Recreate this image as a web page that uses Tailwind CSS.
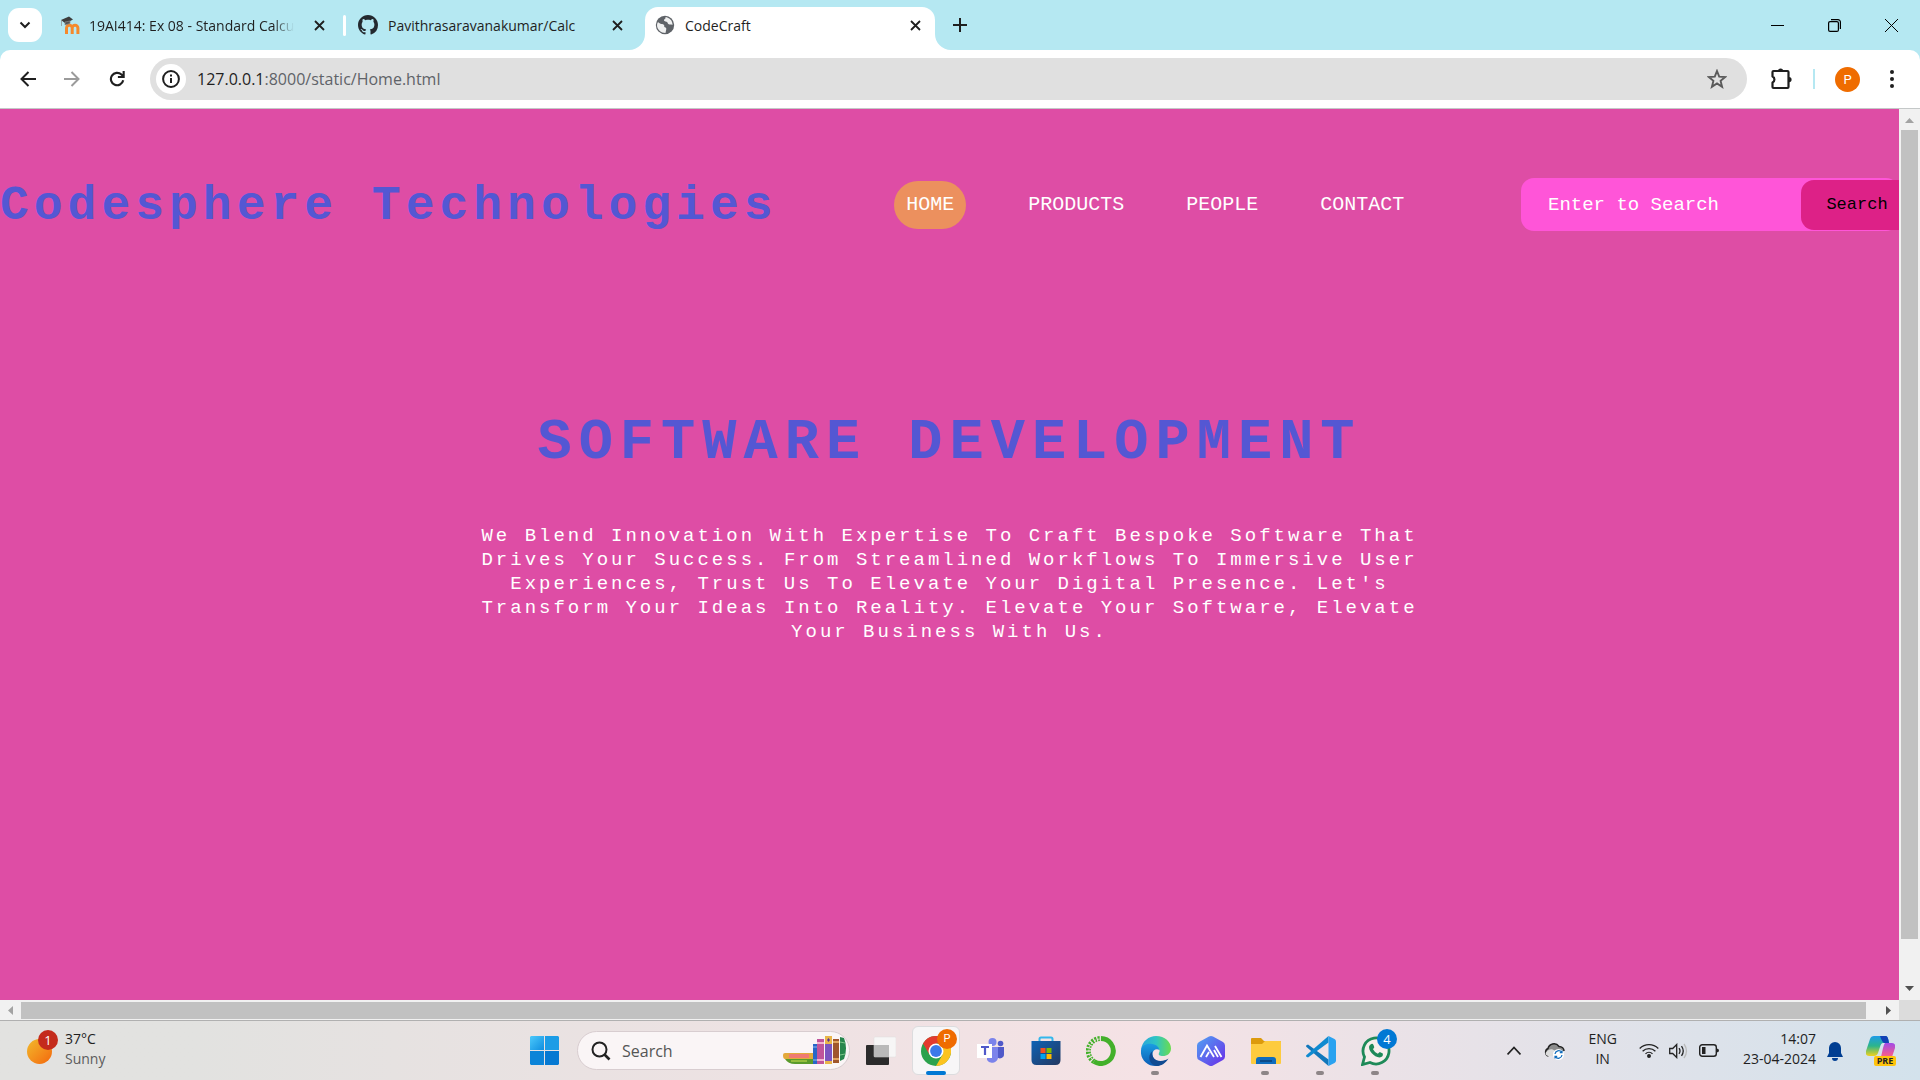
<!DOCTYPE html>
<html lang="en">
<head>
<meta charset="utf-8">
<title>CodeCraft</title>
<script src="https://cdn.jsdelivr.net/npm/@tailwindcss/browser@4"></script>
</head>
<body class="flex h-screen flex-col overflow-hidden bg-white font-['Open_Sans',sans-serif] text-[#1f1f1f]">

<!-- Tab strip -->
<div class="flex h-[50px] shrink-0 items-end bg-[#b5e8f2]">
  <div class="flex h-[50px] items-center pl-2">
    <button aria-label="Search tabs" class="grid h-[34px] w-[34px] place-items-center rounded-[11px] bg-white">
      <svg class="h-3 w-3" viewBox="0 0 12 12" fill="none" stroke="#1f1f1f" stroke-width="2"><path d="M1.5 3.5 6 8l4.500-4.500"/></svg>
    </button>
  </div>
  <div class="flex h-[50px] w-[293px] items-center pl-[18px]">
    <svg class="h-5 w-5 shrink-0" viewBox="0 0 20 20"><path d="M6.500 19v-6a2.800 2.800 0 0 1 5.700 0v6m0-6a2.800 2.800 0 0 1 5.700 0v6" fill="none" stroke="#f5892b" stroke-width="3"/><path d="M1 5 9 1.500l4 3L5.500 8.500z" fill="#3d3d3d"/><path d="M5 7v3l5-1.500V6zM1.500 5v6" fill="#555" stroke="#888" stroke-width=".7"/></svg>
    <span class="ml-[9px] bg-linear-to-r from-[#1f1f1f] from-90% to-transparent bg-clip-text text-[14px] whitespace-nowrap text-transparent">19AI414: Ex 08 - Standard Calcu</span>
    <button aria-label="Close tab" class="ml-auto mr-[6px] grid h-5 w-5 place-items-center"><svg class="h-[11px] w-[11px]" viewBox="0 0 11 11" stroke="#1f1f1f" stroke-width="1.800"><path d="m1 1 9 9M10 1 1 10"/></svg></button>
  </div>
  <div class="mb-[14px] ml-2 h-[21px] w-[3px] rounded bg-white"></div>
  <div class="flex h-[50px] w-[299px] items-center pl-3">
    <svg class="h-5 w-5 shrink-0" viewBox="0 0 16 16" fill="#24292f"><path d="M8 0C3.580 0 0 3.580 0 8c0 3.540 2.290 6.530 5.470 7.590.4.070.55-.17.55-.38 0-.19-.01-.82-.01-1.490-2.010.37-2.530-.49-2.690-.94-.09-.23-.48-.94-.82-1.130-.28-.15-.68-.52-.01-.53.63-.01 1.080.58 1.230.82.72 1.210 1.870.87 2.330.66.07-.52.28-.87.51-1.070-1.780-.2-3.640-.89-3.640-3.950 0-.87.31-1.590.82-2.150-.08-.2-.36-1.020.08-2.120 0 0 .67-.21 2.200.82.640-.18 1.320-.27 2-.27s1.360.09 2 .27c1.530-1.040 2.200-.82 2.200-.82.44 1.100.16 1.920.08 2.120.51.56.82 1.270.82 2.150 0 3.070-1.870 3.750-3.650 3.950.29.25.54.73.54 1.480 0 1.070-.01 1.930-.01 2.200 0 .21.15.46.55.38A8.010 8.010 0 0 0 16 8c0-4.420-3.580-8-8-8z"/></svg>
    <span class="ml-[10px] text-[14px] whitespace-nowrap">Pavithrasaravanakumar/Calc</span>
    <button aria-label="Close tab" class="mr-[18px] ml-auto grid h-5 w-5 place-items-center"><svg class="h-[11px] w-[11px]" viewBox="0 0 11 11" stroke="#1f1f1f" stroke-width="1.800"><path d="m1 1 9 9M10 1 1 10"/></svg></button>
  </div>
  <div class="relative flex h-[43px] w-[290px] items-center rounded-t-[13px] bg-white pr-[10px] pb-[7px] pl-[10px]">
    <svg class="absolute bottom-0 -left-4 h-4 w-4" viewBox="0 0 16 16" fill="#fff"><path d="M16 0v16H0A16 16 0 0 0 16 0"/></svg>
    <svg class="absolute -right-4 bottom-0 h-4 w-4" viewBox="0 0 16 16" fill="#fff"><path d="M0 0v16h16A16 16 0 0 1 0 0"/></svg>
    <svg class="h-5 w-5" viewBox="0 0 20 20"><circle cx="10" cy="10" r="9.200" fill="#5f6368"/><path d="M3 7c2 2.500 5 1.500 6 3 .8 1.500-.5 2 1.500 2.500 1.500.5.500 3 0 5.500C6 18 2 14.500 2 10c0-1 .4-2.200 1-3M10 2c1.500.5 0 2-1 2.800C8.500 6 10 6.500 11.500 6.800c1.500.4 1 2.700 3 2.700 1.500 0 2.500-.5 3 .5.200-4-2.500-7.500-7.500-8" fill="#fff" fill-opacity=".9"/></svg>
    <span class="ml-[10px] text-[14px]">CodeCraft</span>
    <button aria-label="Close tab" class="ml-auto grid h-5 w-5 place-items-center"><svg class="h-[11px] w-[11px]" viewBox="0 0 11 11" stroke="#1f1f1f" stroke-width="1.800"><path d="m1 1 9 9M10 1 1 10"/></svg></button>
  </div>
  <button aria-label="New tab" class="ml-[18px] grid h-[50px] w-[14px] place-items-center"><svg class="h-[14px] w-[14px]" viewBox="0 0 14 14" stroke="#1f1f1f" stroke-width="2"><path d="M7 0v14M0 7h14"/></svg></button>
  <div class="ml-auto flex h-[50px] items-center">
    <button aria-label="Minimize" class="grid h-full w-[57px] place-items-center"><svg class="h-[13px] w-[13px]" viewBox="0 0 13 13" stroke="#000"><path d="M0 6.500h13"/></svg></button>
    <button aria-label="Restore" class="grid h-full w-[57px] place-items-center"><svg class="h-[13px] w-[13px]" viewBox="0 0 13 13" fill="none" stroke="#000" stroke-width="1.200"><rect x=".6" y="2.600" width="9.800" height="9.800" rx="1.500"/><path d="M3 .6h7a2.400 2.400 0 0 1 2.400 2.400v7"/></svg></button>
    <button aria-label="Close" class="grid h-full w-[57px] place-items-center"><svg class="h-[13px] w-[13px]" viewBox="0 0 13 13" stroke="#000"><path d="m0 0 13 13M13 0 0 13"/></svg></button>
  </div>
</div>

<!-- Toolbar -->
<div class="shrink-0 bg-[#b5e8f2]">
  <div class="flex h-[59px] items-center rounded-t-[10px] border-b border-[#c4c8c8] bg-white">
    <button aria-label="Back" class="ml-5 grid h-4 w-4 place-items-center"><svg class="h-4 w-4" viewBox="0 0 16 16" fill="none" stroke="#1f1f1f" stroke-width="2"><path d="M16 8H1.500M8.500 1 1.500 8l7 7"/></svg></button>
    <button aria-label="Forward" class="ml-7 grid h-4 w-4 place-items-center"><svg class="h-4 w-4" viewBox="0 0 16 16" fill="none" stroke="#9b9b9b" stroke-width="2"><path d="M0 8h14.500M7.500 1l7 7-7 7"/></svg></button>
    <button aria-label="Reload" class="ml-7 grid h-[18px] w-[18px] place-items-center"><svg class="h-4 w-4" viewBox="0 0 18 18" fill="none" stroke="#1f1f1f" stroke-width="2.400"><path d="M16 10.500A7 7 0 1 1 14 4l2 2M16.500 0v6.700H10"/></svg></button>
    <form class="ml-6 flex h-[42px] flex-1 items-center rounded-full bg-[#e0e0e0] pr-5 pl-[6px]">
      <span class="grid h-[30px] w-[30px] place-items-center rounded-full bg-white"><svg class="h-[18px] w-[18px]" viewBox="0 0 18 18" fill="none" stroke="#1f1f1f" stroke-width="2"><circle cx="9" cy="9" r="7.900"/><path d="M9 8v5M9 4.500v2"/></svg></span>
      <span class="ml-[11px] flex-1 text-[16px] text-[#5f6368]"><span class="text-[#1f1f1f]">127.0.0.1</span>:8000/static/Home.html</span>
      <button type="button" aria-label="Bookmark" class="grid h-5 w-5 place-items-center"><svg class="h-5 w-5" viewBox="0 0 20 20" fill="none" stroke="#5a5a5a" stroke-width="1.900"><path d="m10 2 2.200 5.600 6 .4-4.600 3.900 1.500 5.900L10 14.500l-5.100 3.300 1.500-5.900L1.800 8l6-.4z"/></svg></button>
    </form>
    <button aria-label="Extensions" class="ml-[23px] grid h-[22px] w-[22px] place-items-center"><svg class="h-[22px] w-[22px]" viewBox="0 0 22 22"><path d="M3.500 3h14q1 0 1 1v15q0 1-1 1h-14q-1 0-1-1v-4.500a3.300 3.300 0 0 0 0-6V4q0-1 1-1z" fill="none" stroke="#1f1f1f" stroke-width="2.200" stroke-linejoin="round"/><path d="M8 3a2.600 2.600 0 0 1 5.200 0M19 9a2.600 2.600 0 0 1 0 5.200" fill="#1f1f1f"/></svg></button>
    <span class="ml-[21px] h-5 w-[2px] bg-[#b5e8f2]"></span>
    <button aria-label="Profile" class="ml-5 h-[25px] w-[25px] rounded-full bg-[#ef6c00] font-['Roboto',sans-serif] text-[13px] leading-[25px] text-white">P</button>
    <button aria-label="Menu" class="mr-[19px] ml-[23px] grid h-5 w-[18px] place-items-center"><svg class="h-5 w-1" viewBox="0 0 4 20" fill="#1f1f1f"><circle cx="2" cy="3" r="2"/><circle cx="2" cy="10" r="2"/><circle cx="2" cy="17" r="2"/></svg></button>
  </div>
</div>

<!-- Viewport with classic scrollbars -->
<div class="flex min-h-0 flex-1">
  <main class="min-w-0 flex-1 overflow-hidden bg-[#de4da5] font-['Liberation_Mono',monospace]">
    <header class="flex items-center justify-between pt-[69px]">
      <div class="pt-1 text-5xl leading-[49px] font-bold tracking-[5px] whitespace-nowrap text-[#5457d3]">Codesphere Technologies</div>
      <nav class="flex items-center gap-[62px] text-xl leading-7 text-white">
        <a href="#" class="rounded-[24px] bg-[#ec905e] px-3 py-[10px]">HOME</a>
        <a href="#">PRODUCTS</a>
        <a href="#">PEOPLE</a>
        <a href="#">CONTACT</a>
      </nav>
      <form class="flex h-[53px] w-[378px] items-center rounded-[13px] bg-[#ff55d8]">
        <input type="text" aria-label="Enter to Search" placeholder="Enter to Search" class="h-full w-[280px] shrink-0 bg-transparent pl-[27px] text-[19px] text-white outline-none placeholder:text-white">
        <button type="button" class="h-[50px] w-[112px] shrink-0 rounded-[13px] bg-[#dd2187] text-[17px] text-black">Search</button>
      </form>
    </header>
    <h1 class="mt-[178px] text-center text-[57px] leading-[68px] font-bold tracking-[7px] text-[#5457d3]">SOFTWARE DEVELOPMENT</h1>
    <p class="mx-auto mt-[47px] max-w-[950px] text-center text-[19px] leading-6 tracking-[3px] text-white">We Blend Innovation With Expertise To Craft Bespoke Software That Drives Your Success. From Streamlined Workflows To Immersive User Experiences, Trust Us To Elevate Your Digital Presence. Let's Transform Your Ideas Into Reality. Elevate Your Software, Elevate Your Business With Us.</p>
  </main>
  <div class="flex w-[21px] shrink-0 flex-col items-center bg-[#f1f1f1]">
    <svg class="h-[21px] w-[9px] shrink-0" viewBox="0 0 9 21"><path d="M0 14h9L4.500 9z" fill="#a3a3a3"/></svg>
    <div class="w-[17px] flex-1 bg-[#c1c1c1]"></div>
    <svg class="mt-10 h-[21px] w-[9px] shrink-0" viewBox="0 0 9 21"><path d="M0 7h9l-4.500 5z" fill="#505050"/></svg>
  </div>
</div>
<div class="flex h-5 shrink-0 items-center bg-[#f1f1f1]">
  <svg class="h-[9px] w-[21px]" viewBox="0 0 21 9"><path d="M13 0v9L8 4.500z" fill="#a3a3a3"/></svg>
  <div class="h-[17px] flex-1 bg-[#c1c1c1]"></div>
  <svg class="ml-[12px] h-[9px] w-[21px]" viewBox="0 0 21 9"><path d="M8 0v9l5-4.500z" fill="#505050"/></svg>
  <div class="h-full w-[21px] bg-[#dcdcdc]"></div>
</div>

<!-- Taskbar -->
<div class="grid h-[60px] shrink-0 grid-cols-[1fr_auto_1fr] items-center border-t border-[#b0b0b0] bg-linear-to-r from-[#e2e2e0] from-10% via-[#f5e2e5] via-60% to-[#d3e2ec]">
  <div class="flex items-center pb-1 pl-[27px]">
    <div class="relative mb-1 h-[34px] w-8">
      <div class="absolute bottom-0 left-0 h-[25px] w-[25px] rounded-full bg-linear-to-br from-[#f0b92c] to-[#f2650b]"></div>
      <div class="absolute top-0 left-[11px] h-5 w-5 rounded-full bg-[#c42b1c] text-center text-[13px] leading-5 text-white">1</div>
    </div>
    <div class="ml-[6px] text-[14px] leading-5"><div>37°C</div><div class="text-[#5c5c5c]">Sunny</div></div>
  </div>

  <div class="flex h-[59px] items-center">
    <button aria-label="Start" class="grid h-full w-[55px] place-items-center"><svg class="h-[29px] w-[29px]" viewBox="0 0 29 29"><defs><linearGradient id="win" x1="0" y1="0" x2="1" y2="1" gradientUnits="objectBoundingBox"><stop stop-color="#4cc9fb"/><stop offset="1" stop-color="#0f8ee0"/></linearGradient></defs><path d="M1 0h13v14H0V1z" fill="url(#win)"/><path d="M15 0h13l1 1v13H15z" fill="#1c9ce6"/><path d="M0 15h14v14H1l-1-1z" fill="#0c84d8"/><path d="M15 15h14v13l-1 1H15z" fill="#0679d2"/></svg></button>
    <label class="ml-[5px] flex h-[39px] w-[273px] items-center overflow-hidden rounded-full border border-[#d8cdd0] bg-[#faf5f6] pr-[3px] pl-[13px]">
      <svg class="h-5 w-5" viewBox="0 0 20 20" fill="none" stroke="#222" stroke-width="2"><circle cx="8.500" cy="8.500" r="7"/><path d="m13.500 13.500 5 5" stroke-width="2.600"/></svg>
      <input type="text" placeholder="Search" class="ml-[11px] w-[160px] min-w-0 text-[16px] outline-none placeholder:text-[#555]">
      <svg class="ml-auto h-[29px] w-[63px] shrink-0" viewBox="0 0 63 29"><path d="M0 19q0-2 2-2h28v6H2q-2 0-2-4" fill="#e3a93c"/><path d="M6 18h20v4H6z" fill="#f07a72"/><path d="M2 23h28v5H12q-7 0-10-5" fill="#5a9a2b"/><path d="M8 25h16" stroke="#a8c845" stroke-width="1.500"/><path d="M30 8h4v20h-4z" fill="#2767c8"/><path d="M30 11h4M30 24h4" stroke="#8db7ef"/><path d="M34 3h7v25h-7z" fill="#c0559b"/><path d="M34 7h7M34 24h7" stroke="#f3b3cf" stroke-width="2"/><path d="M42 0h7v28h-7z" fill="#7d55c0"/><path d="M42 0h7v8h-7zM42 25h7v3h-7z" fill="#e8b54a"/><path d="m45.500 2 1.500 2-1.500 2L44 4z" fill="#5a3692"/><path d="M50 3h6v24h-6z" fill="#a0562c"/><path d="M50 6h6M50 23h6" stroke="#e1a45d" stroke-width="2"/><path d="m57 1 4 1q4 10 0 21l-4 2z" fill="#27864d"/><path d="m57 6 5 1M57 19l5-1" stroke="#7cc58a"/></svg>
    </label>
    <div class="ml-[3px] grid grid-cols-[repeat(10,55px)]">
      <button aria-label="Task view" class="grid h-[59px] place-items-center"><svg class="h-[30px] w-[30px]" viewBox="0 0 30 30"><rect y="9" width="23" height="20" rx="1" fill="#2b2b2b"/><rect x="8" y="1" width="22" height="20" rx="1" fill="#f7f7f7" fill-opacity=".94" stroke="#ddd" stroke-width=".5"/><path d="M8 9h15v12H8z" fill="#b9b9b9"/></svg></button>
      <button aria-label="Chrome" class="relative grid h-[59px] place-items-center">
        <span class="absolute top-[5px] left-1 h-[49px] w-12 rounded-md border border-[#dcdcde] bg-[#f7f6f7]"></span>
        <svg class="relative h-[30px] w-[30px]" viewBox="0 0 30 30"><circle cx="15" cy="15" r="15" fill="#2ba24c"/><path d="M2 7.500A15 15 0 0 1 28 7.500H15L8.500 18.800z" fill="#e33b2e"/><path d="M28 7.500A15 15 0 0 1 15 30l6.500-11.300V7.500z" fill="#fcc31e"/><circle cx="15" cy="15" r="7.500" fill="#fff"/><circle cx="15" cy="15" r="5.900" fill="#3b79e8"/></svg>
        <span class="absolute top-2 right-[6px] h-5 w-5 rounded-full bg-[#ef6c00] font-['Roboto',sans-serif] text-[11px] leading-5 text-white">P</span>
        <span class="absolute bottom-[5px] left-[18px] h-1 w-5 rounded-full bg-[#0078d4]"></span>
      </button>
      <button aria-label="Teams" class="grid h-[59px] place-items-center"><svg class="h-[26px] w-[28px]" viewBox="0 0 28 26"><circle cx="23.500" cy="5.500" r="2.800" fill="#5059c9"/><path d="M20 9h7v7a4 4 0 0 1-7 3z" fill="#5059c9"/><circle cx="15.500" cy="4" r="4" fill="#7b83eb"/><path d="M10 9h11v9a6 6 0 0 1-11 4z" fill="#7b83eb"/><rect y="6" width="15" height="14" fill="#fff"/><path d="M4 9h8M8 9v8" stroke="#5059c9" stroke-width="2.200"/></svg></button>
      <button aria-label="Store" class="grid h-[59px] place-items-center"><svg class="h-[30px] w-[30px]" viewBox="0 0 30 30"><defs><linearGradient id="st" x1="0" y1="0" x2="1" y2="1"><stop stop-color="#0d62b5"/><stop offset="1" stop-color="#243860"/></linearGradient></defs><path d="M8.500 6V3Q8.500 1.500 10 1.500h10q1.500 0 1.500 1.500v3" fill="none" stroke="#33b7ec" stroke-width="2"/><path d="M.5 5h29v19q0 5-5 5h-19q-5 0-5-5z" fill="url(#st)"/><path d="M9.500 12h5v5h-5z" fill="#f25022"/><path d="M15.500 12h5v5h-5z" fill="#7fba00"/><path d="M9.500 18h5v5h-5z" fill="#00a4ef"/><path d="M15.500 18h5v5h-5z" fill="#ffb900"/></svg></button>
      <button aria-label="Anaconda" class="grid h-[59px] place-items-center"><svg class="h-[30px] w-[30px]" viewBox="0 0 30 30" fill="none" stroke="#43b02a"><path d="M15 2.500A12.500 12.500 0 1 1 8 25.500" stroke-width="5"/><path d="M8 25.500A12.500 12.500 0 0 1 15 2.500" stroke-width="5" stroke-dasharray="2 1.200"/><path d="M6 23A12 12 0 0 1 14 3" stroke="#f7e3e6" stroke-width="1" stroke-dasharray="2 2"/></svg></button>
      <button aria-label="Edge" class="relative grid h-[59px] place-items-center"><svg class="h-[30px] w-[30px]" viewBox="0 0 30 30"><defs><linearGradient id="e1"><stop stop-color="#2aa5dc"/><stop offset=".5" stop-color="#2fc4c4"/><stop offset="1" stop-color="#6bdc4e"/></linearGradient><linearGradient id="e2" x1="0" y1="0" x2="0" y2="1"><stop stop-color="#1b9de2"/><stop offset="1" stop-color="#0b5cb5"/></linearGradient></defs><path d="M0 14C1 5 8 0 15 0c9 0 15 6 15 12.500 0 5-4 7.500-8 7.500-3.500 0-5-1.200-4-3 2-3-1-7-6-7-6 0-11 1-12 4" fill="url(#e1)"/><path d="M0 14c1-5 6-7 11-6 4 .5 7 3 7.500 6-3-2-7 0-7 4 0 6 6 9 14 6-3 4-7 6-11 6C6 30-1 23 0 14" fill="url(#e2)"/><path d="M11.500 15c-1.500 5 2 10 8 10 3 0 6-1 8-2.500-3 5-7.500 7.500-12 7.500-7-1-10-10-4-15" fill="#104a91"/></svg><span class="absolute bottom-[5px] left-[23px] h-1 w-2 rounded-full bg-[#8d8587]"></span></button>
      <button aria-label="AI assistant" class="grid h-[59px] place-items-center"><svg class="h-[30px] w-[28px]" viewBox="0 0 28 30"><defs><linearGradient id="ai" x1="0" y1="0" x2="1" y2="1"><stop stop-color="#50a4f3"/><stop offset="1" stop-color="#6b2be8"/></linearGradient></defs><path d="M12 .5q2-1 4 0l10 5.500q2 1 2 3.500v11q0 2-2 3.500l-10 5.500q-2 1-4 0L2 24q-2-1-2-3.500v-11Q0 7 2 6z" fill="url(#ai)"/><path d="m3.500 21 6.500-11.500 7 11.500M9 21l3-5M18 10l6.500 11M17 14l4 7" fill="none" stroke="#fff" stroke-width="1.800"/></svg></button>
      <button aria-label="File Explorer" class="relative grid h-[59px] place-items-center"><svg class="h-[30px] w-[30px]" viewBox="0 0 30 30"><path d="M0 3q0-1 1-1h9l3 3h16q1 0 1 1v8H0z" fill="#dc9a0c"/><path d="M0 8h11l3-3h15q1 0 1 1v21q0 1-1 1H1q-1 0-1-1z" fill="#fdcb3f"/><path d="M5 28v-4q0-3 3-3h14q3 0 3 3v4z" fill="#0f6cbd"/><path d="M9 25h12" stroke="#0a3f78" stroke-width="1.500"/></svg><span class="absolute bottom-[5px] left-[23px] h-1 w-2 rounded-full bg-[#8d8587]"></span></button>
      <button aria-label="Visual Studio Code" class="relative grid h-[59px] place-items-center"><svg class="h-[30px] w-[30px]" viewBox="0 0 30 30"><path d="m2 8.500 20.500 15V30L.5 11q-1-1 0-1.800z" fill="#1177bb"/><path d="M2 21.500 22.500 6.500V0L.5 19q-1 1 0 1.800z" fill="#0f8ad0"/><path d="m22.500 0 6 3q1.500.8 1.500 2.500v19q0 1.700-1.500 2.500l-6 3z" fill="#2aa2f0"/></svg><span class="absolute bottom-[5px] left-[23px] h-1 w-2 rounded-full bg-[#8d8587]"></span></button>
      <button aria-label="WhatsApp" class="relative grid h-[59px] place-items-center"><svg class="h-[30px] w-[30px]" viewBox="0 0 30 30"><path d="m1.500 28.500 2-7.500a13 13 0 1 1 5.500 5.500z" fill="#f6efec" stroke="#1e8a58" stroke-width="2.800"/><path d="M9.500 8.500q2-1.500 3 .5l.8 2.200-1.300 2q1.500 3 4.800 4.500l2-1.700 3 1.500q.8 3.500-3.300 4C13 21 7 14.500 8.200 10z" fill="#1e8a58"/></svg><span class="absolute top-2 right-[6px] h-5 w-5 rounded-full bg-[#0078d4] text-[13px] leading-5 text-white">4</span><span class="absolute bottom-[5px] left-[23px] h-1 w-2 rounded-full bg-[#8d8587]"></span></button>
    </div>
  </div>

  <div class="flex items-center justify-end pr-[25px]">
    <svg class="h-[14px] w-[14px]" viewBox="0 0 14 14" fill="none" stroke="#222" stroke-width="1.800"><path d="m.5 10.500 6.500-7 6.500 7"/></svg>
    <svg class="ml-[23px] h-[18px] w-[21px]" viewBox="0 0 21 18"><path d="M4.500 14a4 4 0 0 1-.5-7.500C5 2 11.500-.5 15 4.500c3 0 5 2 5 4.500" fill="#8c8c8c" stroke="#222" stroke-width="1.500"/><path d="M1.500 11C4 7 8 6 11 9l-1 5H4q-2.500-.5-2.500-3" fill="#ddd"/><circle cx="14.500" cy="12.500" r="5.500" fill="#fff"/><path d="M11 12a3.700 3.700 0 0 1 6.700-1.700M18 13a3.700 3.700 0 0 1-6.700 1.700M18 8.500v2.200h-2.200M11 16.500v-2.200h2.200" fill="none" stroke="#0f6cbd" stroke-width="1.200"/></svg>
    <div class="ml-[23px] pb-[3px] text-center text-[14px] leading-5"><div>ENG</div><div>IN</div></div>
    <svg class="ml-[22px] h-[15px] w-5" viewBox="0 0 20 15" fill="none" stroke="#222" stroke-width="1.300"><path d="M.7 5.500a13 13 0 0 1 18.600 0M3.600 8.200a9 9 0 0 1 12.800 0M6.500 10.900a5 5 0 0 1 7 0"/><circle cx="10" cy="13" r="1.300" fill="#222"/></svg>
    <svg class="ml-[10px] h-4 w-5" viewBox="0 0 20 16" fill="none" stroke="#222" stroke-width="1.300"><path d="M.7 5.500h3l4-4v13l-4-4h-3zM10 5.200q2 2.800 0 5.600M12.500 3.200q3.500 4.800 0 9.600"/><path d="M15 1q5 7 0 14" stroke="#bbb"/></svg>
    <svg class="ml-[10px] h-[13px] w-5" viewBox="0 0 20 13"><rect x=".7" y=".7" width="16.600" height="11.600" rx="2.500" fill="none" stroke="#222" stroke-width="1.400"/><path d="M3 3h3.500v7H3zM17.500 4.500q2.500 0 2.500 2t-2.500 2z" fill="#222"/></svg>
    <div class="ml-6 pb-[3px] text-right text-[14px] leading-5"><div>14:07</div><div>23-04-2024</div></div>
    <svg class="ml-[11px] h-5 w-4" viewBox="0 0 16 20" fill="#003e92"><path d="M8 1a6 6 0 0 1 6 6v5l2 4H0l2-4V7a6 6 0 0 1 6-6M5 17h6a3 3 0 0 1-6 0"/></svg>
    <div class="relative ml-[23px] h-[30px] w-[29px]">
      <svg class="h-[29px] w-[29px]" viewBox="0 0 29 29"><defs><linearGradient id="c1" x1="0" y1="0" x2="0" y2="1"><stop stop-color="#1e9be8"/><stop offset=".5" stop-color="#2cb58b"/><stop offset="1" stop-color="#f2d21c"/></linearGradient><linearGradient id="c2" x1="0" y1="0" x2="0" y2="1"><stop stop-color="#a14be8"/><stop offset=".6" stop-color="#ee5a96"/><stop offset="1" stop-color="#f58a50"/></linearGradient></defs><path d="M8 0h12q2 0 3 7h-6q-2 0-3 4l-2 6q-1 3-4 3H3q-4 0-3-5L4 3q1-3 4-3" fill="url(#c1)"/><path d="M14 0h6q2 0 3 7h-5q-2-1-4-7" fill="#1241b5"/><path d="M19 7h7q4 0 3 5l-3 9q-1 5-5 5h-9q2-1 3-5l2-9q1-4 2-5" fill="url(#c2)"/></svg>
      <span class="absolute -right-[1px] bottom-0 h-[10px] w-[22px] rounded-[2px] bg-[#ffc40c] text-center text-[9px] leading-[10px] font-bold text-[#222]">PRE</span>
    </div>
  </div>
</div>
</body>
</html>
